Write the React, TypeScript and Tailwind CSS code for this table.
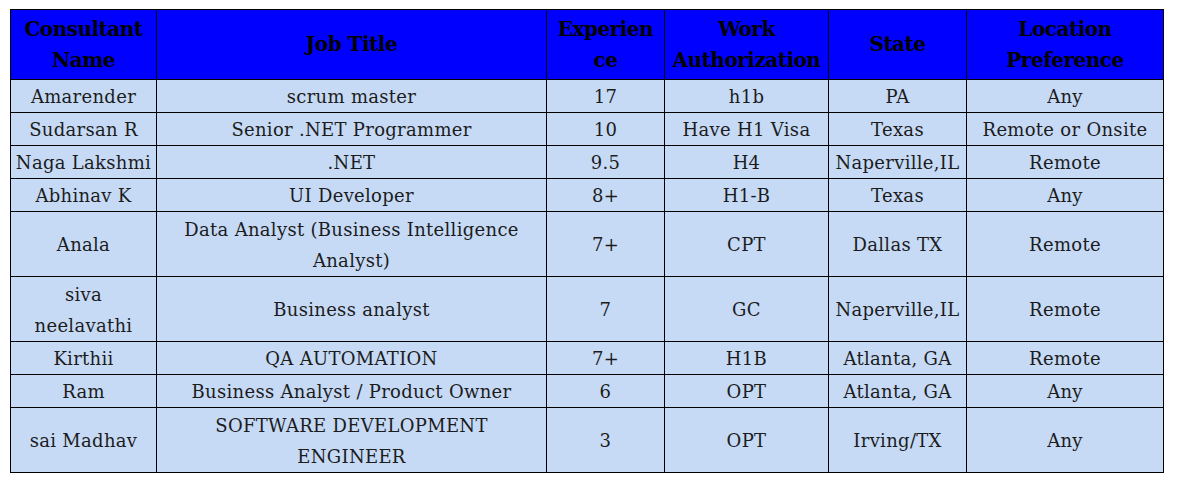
import React from "react";

const rows: { c: React.ReactNode[]; tall?: boolean }[] = [
  { c: ["Amarender", "scrum master", "17", "h1b", "PA", "Any"] },
  { c: ["Sudarsan R", "Senior .NET Programmer", "10", "Have H1 Visa", "Texas", "Remote or Onsite"] },
  { c: ["Naga Lakshmi", ".NET", "9.5", "H4", "Naperville,IL", "Remote"] },
  { c: ["Abhinav K", "UI Developer", "8+", "H1-B", "Texas", "Any"] },
  {
    c: ["Anala", <>Data Analyst (Business Intelligence<br />Analyst)</>, "7+", "CPT", "Dallas TX", "Remote"],
    tall: true,
  },
  {
    c: [<>siva<br />neelavathi</>, "Business analyst", "7", "GC", "Naperville,IL", "Remote"],
    tall: true,
  },
  { c: ["Kirthii", "QA AUTOMATION", "7+", "H1B", "Atlanta, GA", "Remote"] },
  { c: ["Ram", "Business Analyst / Product Owner", "6", "OPT", "Atlanta, GA", "Any"] },
  {
    c: ["sai Madhav", <>SOFTWARE DEVELOPMENT<br />ENGINEER</>, "3", "OPT", "Irving/TX", "Any"],
    tall: true,
  },
];

const headers: React.ReactNode[] = [
  <>Consultant<br />Name</>,
  "Job Title",
  <>Experien<br />ce</>,
  <>Work<br />Authorization</>,
  "State",
  <>Location<br />Preference</>,
];

const widths = ["w-[146px]", "w-[390px]", "w-[118px]", "w-[164px]", "w-[138px]", "w-[197px]"];

export default function App() {
  return (
    <div className="w-[1191px] h-[482px] bg-white pt-[9px] pl-[10px]" style={{ fontFamily: '"DejaVu Serif", "Liberation Serif", serif' }}>
      <table className="border-collapse table-fixed w-[1154px] border border-black">
        <colgroup>
          {widths.map((w, i) => (
            <col key={i} className={w} />
          ))}
        </colgroup>
        <thead>
          <tr className="h-[70px] bg-[#0000ff]">
            {headers.map((h, i) => (
              <th
                key={i}
                className="border border-black text-center align-middle font-bold text-[20px] leading-[31px] text-black whitespace-nowrap p-0 tracking-[-0.5px]"
              >
                {h}
              </th>
            ))}
          </tr>
        </thead>
        <tbody>
          {rows.map((r, ri) => (
            <tr key={ri} className={`${r.tall ? "h-[65px]" : "h-[33px]"} bg-[#c6daf6]`}>
              {r.c.map((v, ci) => (
                <td
                  key={ci}
                  className="border border-black text-center align-middle text-[18px] leading-[31px] text-[#1c1c1c] whitespace-nowrap p-0 pt-px tracking-[0.3px]"
                >
                  {v}
                </td>
              ))}
            </tr>
          ))}
        </tbody>
      </table>
    </div>
  );
}
